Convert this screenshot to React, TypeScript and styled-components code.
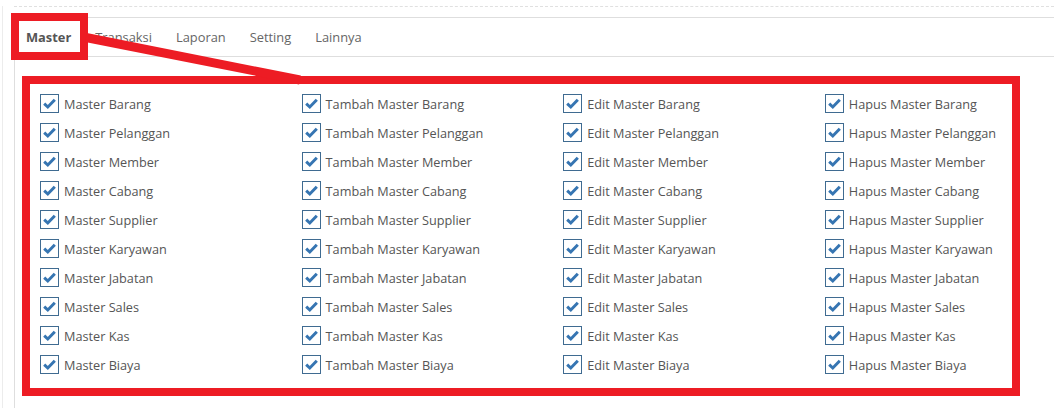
import React from "react";
import styled, { createGlobalStyle } from "styled-components";

const Global = createGlobalStyle`
  html, body { margin: 0; padding: 0; background: #fff; }
  body { font-family: "Open Sans", "Liberation Sans", sans-serif; font-size: 13px; color: #555; }
`;

const Page = styled.div`
  position: relative;
  width: 1054px;
  height: 408px;
  overflow: hidden;
  padding-left: 2px;
  box-sizing: border-box;
`;

const Frame = styled.div`
  border-left: 1px solid #ececec;
  padding-left: 11px;
  height: 100%;
`;

const Dashed = styled.div`
  margin-top: 6px;
  border-top: 1px dashed #e0e0e0;
`;

const Panel = styled.div`
  margin-top: 10px;
  border-top: 1px solid #dedede;
  border-left: 1px solid #dedede;
  height: 420px;
`;

const TabBar = styled.div`
  display: flex;
  height: 38px;
  border-bottom: 1px solid #dedede;
`;

const Tab = styled.div<{ $active?: boolean }>`
  display: flex;
  align-items: center;
  padding: 0 12px 0 ${(p) => (p.$active ? "11px" : "12px")};
  font-size: 12.85px;
  font-weight: ${(p) => (p.$active ? 700 : 400)};
  color: ${(p) => (p.$active ? "#555" : "#666")};
`;

const Content = styled.div`
  padding: 32px 0 0 10px;
`;

const Grid = styled.div`
  display: grid;
  grid-template-columns: repeat(4, 261.6px);
  grid-auto-flow: column;
  grid-template-rows: repeat(10, 29px);
`;

const Item = styled.label`
  display: flex;
  align-items: center;
  padding-left: 15px;
  gap: 5px;
  color: #555;
  font-size: 12.7px;
  white-space: nowrap;
`;

const Box = styled.span`
  width: 17px;
  height: 17px;
  border: 1px solid #3f6b91;
  background: #fff;
  display: flex;
  align-items: center;
  justify-content: center;
  flex: none;
`;

const Overlay = styled.svg`
  position: absolute;
  left: 0;
  top: 0;
  pointer-events: none;
`;

const Check = () => (
  <Box>
    <svg width="15" height="15" viewBox="0 0 15 15">
      <path d="M2.2 7.6 L5.8 11 L12.8 3.8" fill="none" stroke="#3675b2" strokeWidth="3" strokeLinejoin="miter" />
    </svg>
  </Box>
);

const entities = ["Barang", "Pelanggan", "Member", "Cabang", "Supplier", "Karyawan", "Jabatan", "Sales", "Kas", "Biaya"];
const prefixes = ["", "Tambah ", "Edit ", "Hapus "];

export default function App() {
  return (
    <>
      <Global />
      <Page>
        <Frame>
          <Dashed />
          <Panel>
            <TabBar>
              <Tab $active>Master</Tab>
              <Tab>Transaksi</Tab>
              <Tab>Laporan</Tab>
              <Tab>Setting</Tab>
              <Tab>Lainnya</Tab>
            </TabBar>
            <Content>
              <Grid>
                {prefixes.map((p) =>
                  entities.map((e) => (
                    <Item key={p + e}>
                      <Check />
                      {p}Master {e}
                    </Item>
                  ))
                )}
              </Grid>
            </Content>
          </Panel>
        </Frame>
        <Overlay width="1054" height="408" viewBox="0 0 1054 408">
          <rect x="15" y="17" width="69" height="39" fill="none" stroke="#ED1C24" strokeWidth="8" />
          <rect x="26" y="80" width="990" height="312" fill="none" stroke="#ED1C24" strokeWidth="8" />
          <line x1="86" y1="37.5" x2="300" y2="80" stroke="#ED1C24" strokeWidth="9" />
        </Overlay>
      </Page>
    </>
  );
}
